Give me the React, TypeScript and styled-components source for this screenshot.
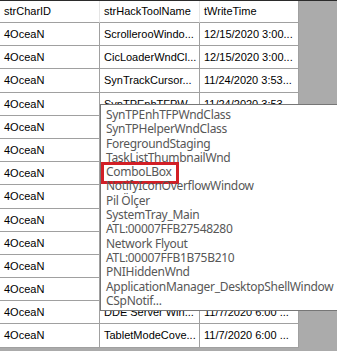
import styled, { createGlobalStyle } from 'styled-components';

const GlobalStyle = createGlobalStyle`
  html, body {
    margin: 0;
    padding: 0;
    background: #ababab;
  }
  #root {
    width: 337px;
    height: 351px;
    overflow: hidden;
  }
`;

const Frame = styled.div`
  position: relative;
  width: 337px;
  height: 351px;
  background: #ababab;
  border-top: 1px solid #2b2b2b;
  box-sizing: border-box;
  overflow: hidden;
`;

const Grid = styled.div`
  display: grid;
  grid-template-columns: 100px 100px 99px;
  width: 299px;
  font-family: 'Liberation Sans', Arial, sans-serif;
  font-size: 11px;
  color: #000;
`;

const Cell = styled.div<{ $header?: boolean }>`
  height: ${(p) => (p.$header ? '21px' : '22.2px')};
  line-height: ${(p) => (p.$header ? '21px' : '22.2px')};
  padding: 0 4px;
  background: #fff;
  border-right: 1px solid ${(p) => (p.$header ? '#e5e5e5' : '#a0a0a0')};
  border-bottom: 1px solid #a0a0a0;
  white-space: nowrap;
  overflow: hidden;
  box-sizing: content-box;
  &:nth-child(3n) {
    border-right: 1px solid #a0a0a0;
  }
`;

const Tip = styled.div`
  position: absolute;
  left: 100px;
  top: 103px;
  width: 245px;
  padding: 3px 0 2px 5px;
  background: #fff;
  border: 1px solid #767676;
  font-family: 'Noto Sans', 'Open Sans', sans-serif;
  font-size: 12px;
  letter-spacing: -0.3px;
  color: #575757;
`;

const TipLine = styled.div<{ $marked?: boolean }>`
  height: 14.3px;
  line-height: 14.3px;
  white-space: nowrap;
  position: relative;
  ${(p) =>
    p.$marked &&
    `
    &::after {
      content: '';
      position: absolute;
      left: -5px;
      top: -3px;
      width: 72px;
      height: 16px;
      border: 3px solid #d21f26;
    }
  `}
`;

const headers = ['strCharID', 'strHackToolName', 'tWriteTime'];

const rows: [string, string][] = [
  ['ScrollerooWindo...', '12/15/2020 3:00...'],
  ['CicLoaderWndCl...', '12/15/2020 3:00...'],
  ['SynTrackCursor...', '11/24/2020 3:53...'],
  ['SynTPEnhTFPW', '11/24/2020 3:53'],
  ['', ''],
  ['', ''],
  ['', ''],
  ['', ''],
  ['', ''],
  ['', ''],
  ['', ''],
  ['', ''],
  ['DDE Server Win...', '11/7/2020 6:00 ...'],
  ['TabletModeCove...', '11/7/2020 6:00 ...'],
];

const tipLines = [
  'SynTPEnhTFPWndClass',
  'SynTPHelperWndClass',
  'ForegroundStaging',
  'TaskListThumbnailWnd',
  'ComboLBox',
  'NotifyIconOverflowWindow',
  'Pil Ölçer',
  'SystemTray_Main',
  'ATL:00007FFB27548280',
  'Network Flyout',
  'ATL:00007FFB1B75B210',
  'PNIHiddenWnd',
  'ApplicationManager_DesktopShellWindow',
  'CSpNotif...',
];

export default function App() {
  return (
    <>
      <GlobalStyle />
      <Frame>
        <Grid>
          {headers.map((h) => (
            <Cell key={h} $header>
              {h}
            </Cell>
          ))}
          {rows.map(([tool, time], i) => (
            <>
              <Cell key={`a${i}`}>4OceaN</Cell>
              <Cell key={`b${i}`}>{tool}</Cell>
              <Cell key={`c${i}`}>{time}</Cell>
            </>
          ))}
        </Grid>
        <Tip>
          {tipLines.map((t) => (
            <TipLine key={t} $marked={t === 'ComboLBox'}>
              {t}
            </TipLine>
          ))}
        </Tip>
      </Frame>
    </>
  );
}
